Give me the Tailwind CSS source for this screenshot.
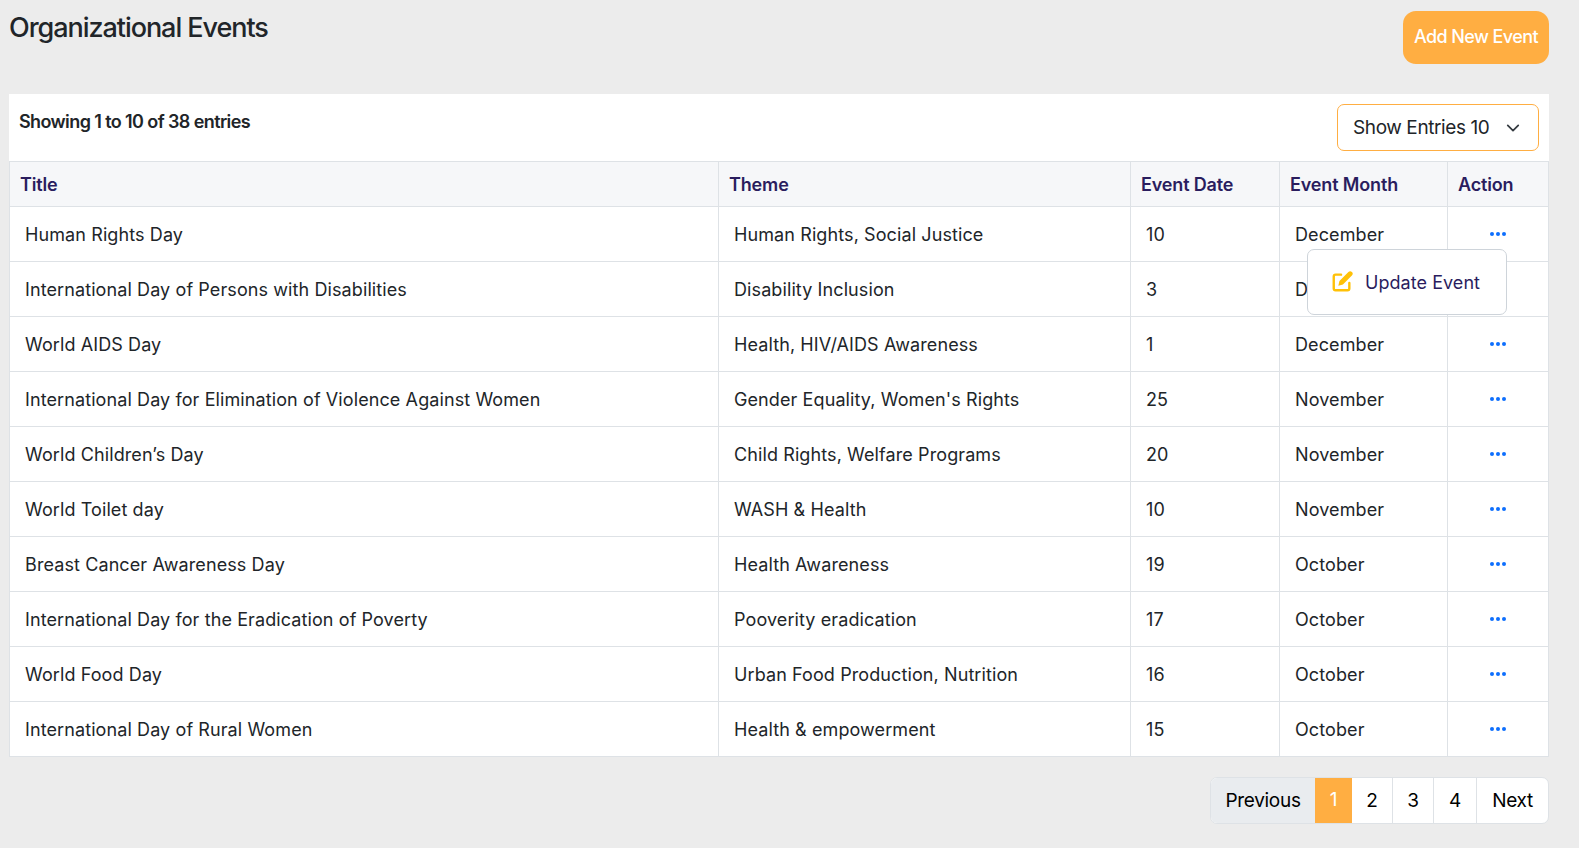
<!DOCTYPE html>
<html><head><meta charset="utf-8"><title>Organizational Events</title>
<script src="https://cdn.jsdelivr.net/npm/@tailwindcss/browser@4"></script></head>
<body class="bg-[#ececec] font-['Inter',sans-serif] text-[#212529] overflow-hidden">
<div class="w-[1579px] h-[848px] pl-[9px] pr-[30px] relative">
  <div class="flex justify-between items-start h-[94px] pt-[11px]">
    <h1 class="text-[27px] leading-[34px] font-medium tracking-[-1.05px] text-[#212529]">Organizational Events</h1>
    <button class="h-[53px] w-[146px] pb-[2px] rounded-[13px] bg-[#ffae42] text-white text-[18px] font-medium tracking-[-0.6px]">Add New Event</button>
  </div>
  <div class="bg-white">
    <div class="flex justify-between h-[67px] pt-[10px] pr-[10px] pl-[10px]">
      <div class="text-[18px] font-semibold tracking-[-0.6px] leading-[35px] h-[35px]">Showing 1 to 10 of 38 entries</div>
      <div class="w-[202px] h-[47px] border border-[#ffae42] rounded-[7px] flex items-center justify-between pl-[15px] pr-[18px]">
        <span class="text-[19px] tracking-[-0.4px] pt-[2px]">Show Entries 10</span>
        <svg class="w-[14px] h-[14px]" viewBox="0 0 16 16" fill="none" stroke="#343a40" stroke-width="2" stroke-linecap="round" stroke-linejoin="round"><path d="M2 5l6 6 6-6"/></svg>
      </div>
    </div>
    <table class="w-[1539px] table-fixed border-collapse text-[18px] tracking-[0.1px]">
      <colgroup><col class="w-[709px]"><col class="w-[412px]"><col class="w-[149px]"><col class="w-[168px]"><col class="w-[101px]"></colgroup>
      <thead class="bg-[#f6f7f9] text-[#2a1d5e] text-left tracking-[-0.15px]">
        <tr class="h-[45px]">
          <th class="border border-[#dee2e6] pl-[10px] font-semibold">Title</th>
          <th class="border border-[#dee2e6] pl-[10px] font-semibold">Theme</th>
          <th class="border border-[#dee2e6] pl-[10px] font-semibold">Event Date</th>
          <th class="border border-[#dee2e6] pl-[10px] font-semibold">Event Month</th>
          <th class="border border-[#dee2e6] pl-[10px] font-semibold">Action</th>
        </tr>
      </thead>
      <tbody class="bg-white">
        <tr class="h-[55px]"><td class="border border-[#dee2e6] pl-[15px]">Human Rights Day</td><td class="border border-[#dee2e6] pl-[15px]">Human Rights, Social Justice</td><td class="border border-[#dee2e6] pl-[15px]">10</td><td class="border border-[#dee2e6] pl-[15px]">December</td><td class="border border-[#dee2e6]"><div class="flex justify-center gap-[2px]"><span class="w-[4px] h-[4px] rounded-full bg-[#0d6efd]"></span><span class="w-[4px] h-[4px] rounded-full bg-[#0d6efd]"></span><span class="w-[4px] h-[4px] rounded-full bg-[#0d6efd]"></span></div></td></tr>
        <tr class="h-[55px]"><td class="border border-[#dee2e6] pl-[15px]">International Day of Persons with Disabilities</td><td class="border border-[#dee2e6] pl-[15px]">Disability Inclusion</td><td class="border border-[#dee2e6] pl-[15px]">3</td><td class="border border-[#dee2e6] pl-[15px]">December</td><td class="border border-[#dee2e6]"><div class="flex justify-center gap-[2px]"><span class="w-[4px] h-[4px] rounded-full bg-[#0d6efd]"></span><span class="w-[4px] h-[4px] rounded-full bg-[#0d6efd]"></span><span class="w-[4px] h-[4px] rounded-full bg-[#0d6efd]"></span></div></td></tr>
        <tr class="h-[55px]"><td class="border border-[#dee2e6] pl-[15px]">World AIDS Day</td><td class="border border-[#dee2e6] pl-[15px]">Health, HIV/AIDS Awareness</td><td class="border border-[#dee2e6] pl-[15px]">1</td><td class="border border-[#dee2e6] pl-[15px]">December</td><td class="border border-[#dee2e6]"><div class="flex justify-center gap-[2px]"><span class="w-[4px] h-[4px] rounded-full bg-[#0d6efd]"></span><span class="w-[4px] h-[4px] rounded-full bg-[#0d6efd]"></span><span class="w-[4px] h-[4px] rounded-full bg-[#0d6efd]"></span></div></td></tr>
        <tr class="h-[55px]"><td class="border border-[#dee2e6] pl-[15px]">International Day for Elimination of Violence Against Women</td><td class="border border-[#dee2e6] pl-[15px]">Gender Equality, Women's Rights</td><td class="border border-[#dee2e6] pl-[15px]">25</td><td class="border border-[#dee2e6] pl-[15px]">November</td><td class="border border-[#dee2e6]"><div class="flex justify-center gap-[2px]"><span class="w-[4px] h-[4px] rounded-full bg-[#0d6efd]"></span><span class="w-[4px] h-[4px] rounded-full bg-[#0d6efd]"></span><span class="w-[4px] h-[4px] rounded-full bg-[#0d6efd]"></span></div></td></tr>
        <tr class="h-[55px]"><td class="border border-[#dee2e6] pl-[15px]">World Children’s Day</td><td class="border border-[#dee2e6] pl-[15px]">Child Rights, Welfare Programs</td><td class="border border-[#dee2e6] pl-[15px]">20</td><td class="border border-[#dee2e6] pl-[15px]">November</td><td class="border border-[#dee2e6]"><div class="flex justify-center gap-[2px]"><span class="w-[4px] h-[4px] rounded-full bg-[#0d6efd]"></span><span class="w-[4px] h-[4px] rounded-full bg-[#0d6efd]"></span><span class="w-[4px] h-[4px] rounded-full bg-[#0d6efd]"></span></div></td></tr>
        <tr class="h-[55px]"><td class="border border-[#dee2e6] pl-[15px]">World Toilet day</td><td class="border border-[#dee2e6] pl-[15px]">WASH &amp; Health</td><td class="border border-[#dee2e6] pl-[15px]">10</td><td class="border border-[#dee2e6] pl-[15px]">November</td><td class="border border-[#dee2e6]"><div class="flex justify-center gap-[2px]"><span class="w-[4px] h-[4px] rounded-full bg-[#0d6efd]"></span><span class="w-[4px] h-[4px] rounded-full bg-[#0d6efd]"></span><span class="w-[4px] h-[4px] rounded-full bg-[#0d6efd]"></span></div></td></tr>
        <tr class="h-[55px]"><td class="border border-[#dee2e6] pl-[15px]">Breast Cancer Awareness Day</td><td class="border border-[#dee2e6] pl-[15px]">Health Awareness</td><td class="border border-[#dee2e6] pl-[15px]">19</td><td class="border border-[#dee2e6] pl-[15px]">October</td><td class="border border-[#dee2e6]"><div class="flex justify-center gap-[2px]"><span class="w-[4px] h-[4px] rounded-full bg-[#0d6efd]"></span><span class="w-[4px] h-[4px] rounded-full bg-[#0d6efd]"></span><span class="w-[4px] h-[4px] rounded-full bg-[#0d6efd]"></span></div></td></tr>
        <tr class="h-[55px]"><td class="border border-[#dee2e6] pl-[15px]">International Day for the Eradication of Poverty</td><td class="border border-[#dee2e6] pl-[15px]">Pooverity eradication</td><td class="border border-[#dee2e6] pl-[15px]">17</td><td class="border border-[#dee2e6] pl-[15px]">October</td><td class="border border-[#dee2e6]"><div class="flex justify-center gap-[2px]"><span class="w-[4px] h-[4px] rounded-full bg-[#0d6efd]"></span><span class="w-[4px] h-[4px] rounded-full bg-[#0d6efd]"></span><span class="w-[4px] h-[4px] rounded-full bg-[#0d6efd]"></span></div></td></tr>
        <tr class="h-[55px]"><td class="border border-[#dee2e6] pl-[15px]">World Food Day</td><td class="border border-[#dee2e6] pl-[15px]">Urban Food Production, Nutrition</td><td class="border border-[#dee2e6] pl-[15px]">16</td><td class="border border-[#dee2e6] pl-[15px]">October</td><td class="border border-[#dee2e6]"><div class="flex justify-center gap-[2px]"><span class="w-[4px] h-[4px] rounded-full bg-[#0d6efd]"></span><span class="w-[4px] h-[4px] rounded-full bg-[#0d6efd]"></span><span class="w-[4px] h-[4px] rounded-full bg-[#0d6efd]"></span></div></td></tr>
        <tr class="h-[55px]"><td class="border border-[#dee2e6] pl-[15px]">International Day of Rural Women</td><td class="border border-[#dee2e6] pl-[15px]">Health &amp; empowerment</td><td class="border border-[#dee2e6] pl-[15px]">15</td><td class="border border-[#dee2e6] pl-[15px]">October</td><td class="border border-[#dee2e6]"><div class="flex justify-center gap-[2px]"><span class="w-[4px] h-[4px] rounded-full bg-[#0d6efd]"></span><span class="w-[4px] h-[4px] rounded-full bg-[#0d6efd]"></span><span class="w-[4px] h-[4px] rounded-full bg-[#0d6efd]"></span></div></td></tr>
      </tbody>
    </table>
  </div>
  <div class="flex justify-end mt-[20px]">
    <div class="flex h-[47px] text-[19px] tracking-[-0.3px] text-black border border-[#dee2e6] rounded-[7px] bg-white overflow-hidden">
      <span class="w-[104px] flex items-center justify-center pt-[2px] bg-[#e9ecef]">Previous</span>
      <span class="w-[37px] flex items-center justify-center bg-[#ffae42] text-white">1</span>
      <span class="w-[41px] flex items-center justify-center pt-[2px] border-r border-[#dee2e6]">2</span>
      <span class="w-[41px] flex items-center justify-center pt-[2px] border-r border-[#dee2e6]">3</span>
      <span class="w-[43px] flex items-center justify-center pt-[2px] border-r border-[#dee2e6]">4</span>
      <span class="w-[71px] flex items-center justify-center pt-[2px]">Next</span>
    </div>
  </div>
  <div class="absolute left-[1307px] top-[249px] w-[200px] h-[66px] bg-white border border-[#ced4da] rounded-[7px] flex items-center pl-[23px] gap-[12px] text-[18px] tracking-[0.05px] text-[#2a1d5e]">
    <svg class="w-[22px] h-[22px]" viewBox="0 0 24 24" fill="none"><path d="M11 4H5a2 2 0 0 0-2 2v13a2 2 0 0 0 2 2h13a2 2 0 0 0 2-2v-6" stroke="#ffc107" stroke-width="2.6" stroke-linecap="round"/><path d="M19 1.200a2.400 2.400 0 0 1 3.800 3.800L13 14.800 8 16l1.200-5z" fill="#ffc107"/></svg>
    <span>Update Event</span>
  </div>
</div>
</body></html>
